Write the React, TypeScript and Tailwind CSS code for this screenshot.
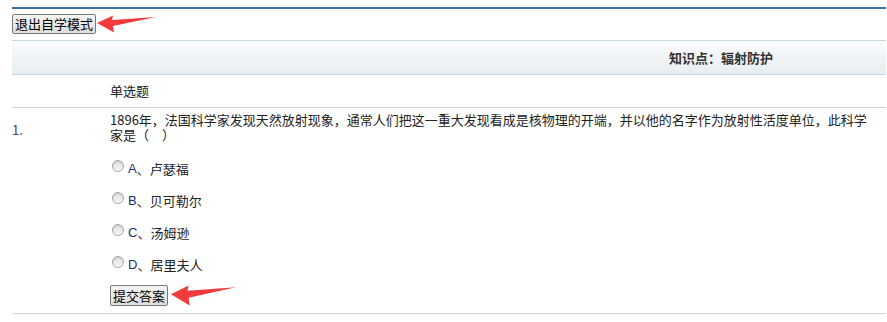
import React from 'react';

const font = 'font-["Noto_Sans_CJK_SC","Noto_Sans",sans-serif]';

const options = [
  { key: 'A', text: '卢瑟福' },
  { key: 'B', text: '贝可勒尔' },
  { key: 'C', text: '汤姆逊' },
  { key: 'D', text: '居里夫人' },
];

function Arrow({ className }: { className: string }) {
  // red hand-drawn style arrow pointing left
  return (
    <svg className={className} viewBox="0 0 60 18" preserveAspectRatio="none">
      <path d="M0 8 L16 0.5 L15 5 L59 2 L16 11 L17 17.5 Z" fill="#f23b3b" />
    </svg>
  );
}

export default function App() {
  return (
    <div className={`${font} relative w-[887px] h-[322px] bg-white text-[13px] text-[#222] overflow-hidden`}>
      <div className="ml-[12px] mr-[1px] pt-[7px]">
        <div className="h-[2px] bg-[#3a719e]" />

        <div className="relative mt-[5px] h-[26px]">
          <button className="h-[20px] px-[2px] border border-[#7a7a7a] rounded-[2px] bg-gradient-to-b from-[#f4f4f4] to-[#dedede] text-[13px] leading-[16px] text-black">
            退出自学模式
          </button>
          <Arrow className="absolute left-[85px] top-[1px] w-[60px] h-[18px]" />
        </div>

        <div className="h-[35px] border-y border-[#c6d5de] bg-gradient-to-b from-[#fbfcfd] to-[#e7edf1] flex items-center justify-end pr-[113px]">
          <span className="font-bold text-[#333]">知识点：辐射防护</span>
        </div>

        <div className="h-[33px] border-b border-[#c6d5de] flex items-center pl-[98px]">
          单选题
        </div>

        <div className="h-[206px] border-b border-[#c6d5de] flex">
          <div className="w-[98px] pt-[12px] text-[#5a2a8c]">1.</div>
          <div className="flex-1 pt-[4px]">
            <p className="leading-[15px]">
              1896年，法国科学家发现天然放射现象，通常人们把这一重大发现看成是核物理的开端，并以他的名字作为放射性活度单位，此科学
              <br />
              家是（　）
            </p>
            <div className="mt-[18px] flex flex-col gap-[15px]">
              {options.map((o) => (
                <label key={o.key} className="flex items-center h-[17px]">
                  <span className="ml-[2px] mb-[5px] w-[12px] h-[12px] rounded-full border border-[#a9a9a9] bg-gradient-to-b from-[#e0e0e0] to-[#f6f6f6] shadow-[inset_0_1px_1px_rgba(0,0,0,0.15)]" />
                  <span className="ml-[4px] text-[#1c2f6e] font-['Liberation_Sans',sans-serif]">{o.key}</span>
                  <span className="text-[#333]">、</span>
                  <span className="text-[#222]">{o.text}</span>
                </label>
              ))}
            </div>
            <div className="relative mt-[12px]">
              <button className="h-[21px] px-[2px] border border-[#7a7a7a] rounded-[2px] bg-gradient-to-b from-[#f4f4f4] to-[#dedede] text-[13px] leading-[16px] text-black">
                提交答案
              </button>
              <Arrow className="absolute left-[61px] top-0 w-[66px] h-[21px]" />
            </div>
          </div>
        </div>
      </div>
    </div>
  );
}
